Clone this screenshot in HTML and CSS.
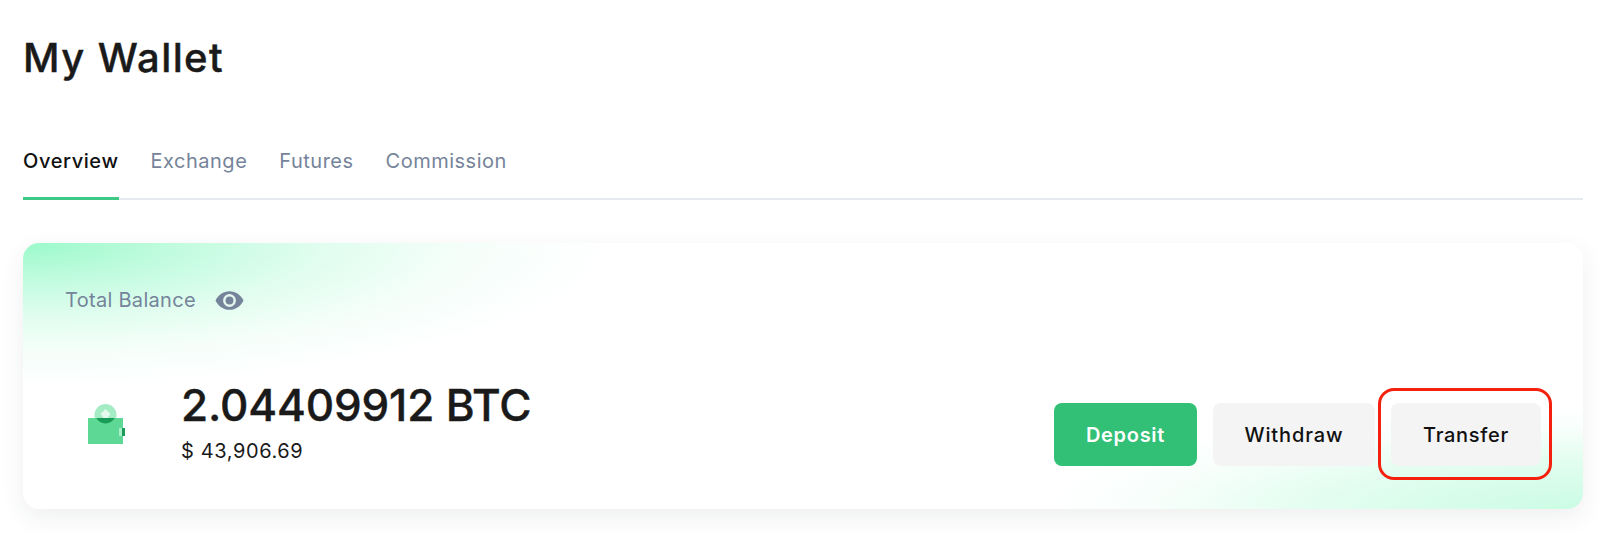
FILE: index.html
```html
<!DOCTYPE html>
<html lang="en">
<head>
  <meta charset="UTF-8">
  <meta name="viewport" content="width=device-width, initial-scale=1.0">
  <title>My Wallet</title>

  <link rel="stylesheet" href="styles.css">
</head>
<body>
  <div class="container">
    <h1 class="title">My Wallet</h1>
    <nav class="tabs">
      <a class="tabs-item tabs-item-active">Overview</a>
      <a class="tabs-item">Exchange</a>
      <a class="tabs-item">Futures</a>
      <a class="tabs-item">Commission</a>
    </nav>
    <section class="balance">
      <div class="balance-label">
        <span>Total Balance</span>
        <svg class="balance-eye" viewBox="0 0 28 20" width="29" height="21">
          <path fill="#75849a" d="M14 1C8 1 3 4.600 0.500 10 3 15.400 8 19 14 19s11-3.600 13.500-9C25 4.600 20 1 14 1z"/>
          <circle cx="14" cy="10" r="6.200" fill="#e6f7ee"/>
          <circle cx="14" cy="10" r="3.800" fill="#75849a"/>
        </svg>
      </div>
      <div class="balance-row">
        <svg class="balance-icon" viewBox="0 0 40 44" width="40" height="44">
          <circle cx="18.500" cy="13" r="11" fill="#a3ecc4"/>
          <rect x="1" y="16" width="35" height="26" fill="#5dd995"/>
          <path fill="#189c58" d="M9.300 16a10.500 10.500 0 0 0 18.400 0z"/>
          <path fill="#e4f9ee" d="M18.500 7l5 5-3 4h-4l-3-4z"/>
          <rect x="32" y="26" width="3" height="8" fill="#a8edc8"/>
          <rect x="35" y="26" width="3" height="8" fill="#189c58"/>
        </svg>
        <div class="balance-amount">
          <div class="balance-btc">2.04409912 BTC</div>
          <div class="balance-usd">$ 43,906.69</div>
        </div>
        <div class="actions">
          <button class="btn btn-primary">Deposit</button>
          <button class="btn btn-withdraw">Withdraw</button>
          <div class="actions-marked">
            <button class="btn btn-transfer">Transfer</button>
            <span class="actions-mark"></span>
          </div>
        </div>
      </div>
    </section>
  </div>
</body>
</html>
```

FILE: styles.css
```css
* { margin: 0; padding: 0; box-sizing: border-box; }

html,
body { width: 100%; height: 100%; background: #fff; overflow: hidden; }

body {
  font-family: Inter, 'Noto Sans', sans-serif;
  color: #1a1a1a;
}

.container {
  padding: 34px 17px 0 23px;
}

.title {
  font-size: 40px;
  line-height: 48px;
  font-weight: 500;
  letter-spacing: 1.4px;
  -webkit-text-stroke: 0.4px #1a1a1a;
  margin-bottom: 67px;
}

.tabs {
  display: flex;
  gap: 32px;
  border-bottom: 2px solid #e6e9ed;
  margin-bottom: 43px;
}
.tabs-item {
  font-size: 20px;
  line-height: 24px;
  padding-bottom: 24px;
  margin-bottom: -2px;
  color: #75849a;
  letter-spacing: 0.5px;
  border-bottom: 3px solid transparent;
}
.tabs-item-active {
  color: #111;
  font-weight: 500;
  letter-spacing: 0.6px;
  border-bottom-color: #3cc985;
}

.balance {
  height: 266px;
  padding: 45px 42px 0 42px;
  border-radius: 16px;
  box-shadow: 0 8px 24px rgba(40, 50, 70, 0.08);
  background:
    radial-gradient(ellipse 590px 145px at 0 0, rgba(130, 248, 190, 0.8), rgba(130, 248, 190, 0.5) 25%, rgba(130, 248, 190, 0.25) 50%, rgba(130, 248, 190, 0.08) 75%, rgba(130, 248, 190, 0) 100%),
    radial-gradient(ellipse 540px 100px at 100% 100%, rgba(130, 248, 190, 0.42), rgba(130, 248, 190, 0.22) 50%, rgba(130, 248, 190, 0.06) 80%, rgba(130, 248, 190, 0) 100%),
    #fff;
}

.balance-label {
  display: flex;
  align-items: center;
  gap: 19px;
  font-size: 20px;
  line-height: 24px;
  letter-spacing: 0.3px;
  color: #75849a;
}
.balance-eye { display: block; }

.balance-row {
  display: flex;
  align-items: flex-start;
  margin-top: 67px;
}
.balance-icon {
  display: block;
  margin: 23px 54px 0 22px;
}
.balance-btc {
  font-size: 44px;
  line-height: 52px;
  font-weight: 500;
  letter-spacing: -0.15px;
  -webkit-text-stroke: 0.4px #1a1a1a;
}
.balance-usd {
  font-size: 20px;
  line-height: 24px;
  letter-spacing: 0.6px;
  margin-top: 8px;
}

.actions {
  display: flex;
  margin: 24px 0 0 auto;
  gap: 16px;
}
.actions-marked {
  position: relative;
}
.actions-mark {
  position: absolute;
  top: -15px;
  right: -11px;
  bottom: -14px;
  left: -13px;
  border: 3px solid #f5210f;
  border-radius: 16px;
}

.btn {
  display: block;
  height: 63px;
  border: 0;
  border-radius: 8px;
  background: #f4f4f4;
  color: #111;
  font-family: inherit;
  font-size: 20px;
  font-weight: 500;
}
.btn-primary {
  width: 143px;
  background: #32bf76;
  color: #fff;
  font-weight: 600;
  letter-spacing: 0.7px;
}
.btn-withdraw { width: 162px; letter-spacing: 0.9px; }
.btn-transfer { width: 150px; letter-spacing: 0.7px; }
```
